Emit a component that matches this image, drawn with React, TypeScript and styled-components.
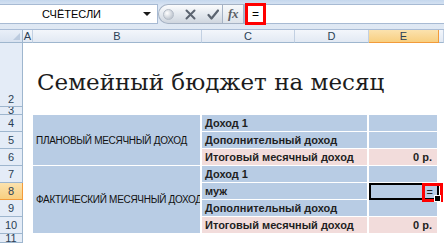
import React from "react";
import styled, { createGlobalStyle, css } from "styled-components";

const GlobalStyle = createGlobalStyle`
  html, body { margin: 0; padding: 0; background: #fff; }
  body {
    width: 444px;
    height: 243px;
    overflow: hidden;
    font-family: "Liberation Sans", Arial, sans-serif;
    font-size: 11px;
    color: #1f1f1f;
  }
`;

const Window = styled.div`
  display: flex;
  flex-direction: column;
  width: 444px;
  height: 243px;
  overflow: hidden;
`;

/* ---------- formula bar ---------- */

const FormulaBar = styled.div`
  display: flex;
  height: 30px;
  box-sizing: border-box;
  padding: 4px 0 5px 0;
  background: linear-gradient(#c5d7ed 0, #dbe6f4 20%, #dfe8f3 100%);
  border-bottom: 1px solid #a9bcd6;
`;

const NameBox = styled.div`
  display: flex;
  align-items: center;
  width: 158px;
  box-sizing: border-box;
  padding-left: 42px;
  background: #fff;
  border: 1px solid #a7bad3;
  border-left: none;
  color: #000;
`;

const DropArrow = styled.span`
  margin-left: auto;
  margin-right: 6px;
  width: 0;
  height: 0;
  border-left: 4px solid transparent;
  border-right: 4px solid transparent;
  border-top: 4px solid #1a1a1a;
`;

const Capsule = styled.div`
  display: flex;
  align-items: center;
  width: 64px;
  box-sizing: border-box;
  padding-left: 4px;
  gap: 11px;
  border: 1px solid #a5b2c4;
  border-right: none;
  border-radius: 11px 0 0 11px;
  background: linear-gradient(#fbfcfd, #e4e9ef 50%, #cfd6df);
`;

const Knob = styled.span`
  width: 9px;
  height: 9px;
  border-radius: 50%;
  border: 1px solid #b4bcc7;
  background: radial-gradient(circle at 35% 35%, #ffffff, #c3cad3 70%);
`;

const Glyph = styled.svg`
  flex: none;
`;

const FxButton = styled.div`
  display: flex;
  align-items: center;
  justify-content: center;
  width: 22px;
  box-sizing: border-box;
  border: 1px solid #a5b2c4;
  background: linear-gradient(#f7f9fb, #dde3ea);
  font-family: "Liberation Serif", "Times New Roman", serif;
  font-style: italic;
  font-weight: bold;
  font-size: 13px;
  color: #5b5f66;
  letter-spacing: -0.5px;
`;

const FormulaInput = styled.div`
  flex: 1;
  display: flex;
  background: #fff;
  border: 1px solid #a7bad3;
  border-right: none;
`;

const RedBox = styled.div`
  display: flex;
  align-items: center;
  justify-content: center;
  width: 21px;
  margin: -2px 0 -2px 0;
  box-sizing: border-box;
  border: 3px solid #ff0000;
  font-size: 12px;
  color: #000;
`;

/* ---------- sheet ---------- */

const Sheet = styled.div`
  flex: 1;
  display: grid;
  grid-template-columns: 23px 10px 169px 93px 74px 70px 1fr;
  grid-template-rows: 13px 64px 8px repeat(7, 17px) 1fr;
  overflow: hidden;
`;

const Corner = styled.div`
  grid-row: 1;
  grid-column: 1;
  position: relative;
  background: linear-gradient(#e9eff8, #d8e2f0);
  border-right: 1px solid #9eb6ce;
  border-bottom: 1px solid #9eb6ce;
  &::after {
    content: "";
    position: absolute;
    right: 2px;
    bottom: 2px;
    border-left: 7px solid transparent;
    border-bottom: 7px solid #bccbdf;
  }
`;

const activeHeader = css`
  background: linear-gradient(#fbe2ae, #f8cf80);
  border-color: #f29b3a;
`;

const ColHeader = styled.div<{ $active?: boolean }>`
  grid-row: 1;
  display: flex;
  align-items: center;
  justify-content: center;
  overflow: hidden;
  box-sizing: border-box;
  background: linear-gradient(#f3f6fb, #e2e9f3);
  border-right: 1px solid #c2d0e2;
  border-bottom: 1px solid #9eb6ce;
  color: #2b3f55;
  ${(p) => p.$active && activeHeader}
`;

const RowHeader = styled.div<{ $row: number; $active?: boolean; $bottom?: boolean }>`
  grid-column: 1;
  grid-row: ${(p) => p.$row};
  display: flex;
  justify-content: center;
  align-items: ${(p) => (p.$bottom ? "flex-end" : "center")};
  overflow: hidden;
  box-sizing: border-box;
  background: #e4ecf7;
  border-right: 1px solid #9eb6ce;
  border-bottom: 1px solid #9eb6ce;
  color: #2b3f55;
  line-height: 13px;
  ${(p) => p.$active && activeHeader}
`;

const Title = styled.div`
  grid-row: 2;
  grid-column: 3 / 8;
  align-self: end;
  padding: 0 0 12px 4px;
  white-space: nowrap;
  font-family: "DejaVu Serif", "Liberation Serif", serif;
  font-size: 23px;
  color: #1c1c1c;
`;

const cellBase = css`
  display: flex;
  align-items: center;
  box-sizing: border-box;
  border-right: 2px solid #fff;
  border-bottom: 1px solid #fff;
  white-space: nowrap;
  overflow: hidden;
`;

const GroupLabel = styled.div<{ $from: number; $to: number }>`
  ${cellBase}
  grid-column: 3;
  grid-row: ${(p) => `${p.$from} / ${p.$to}`};
  padding-left: 3px;
  font-size: 10px;
  letter-spacing: -0.3px;
  color: #111;
  background: #b8cce4;
`;

const Item = styled.div<{ $row: number; $total?: boolean }>`
  ${cellBase}
  grid-column: 4 / 6;
  grid-row: ${(p) => p.$row};
  padding-left: 3px;
  font-weight: bold;
  background: ${(p) => (p.$total ? "#f2dcdb" : "#b8cce4")};
`;

const Value = styled.div<{ $row: number; $total?: boolean; $selected?: boolean }>`
  ${cellBase}
  grid-column: 6;
  grid-row: ${(p) => p.$row};
  justify-content: flex-end;
  padding-right: 5px;
  font-weight: bold;
  background: ${(p) => (p.$total ? "#f2dcdb" : "#b8cce4")};
  ${(p) =>
    p.$selected &&
    css`
      position: relative;
      overflow: visible;
      border: 2px solid #000;
      font-weight: normal;
      padding-right: 4px;
    `}
`;

const Marker = styled.span`
  position: absolute;
  left: 51px;
  top: -2px;
  width: 21px;
  height: 19px;
  box-sizing: border-box;
  border: 3px solid #ff0000;
`;

const FillHandle = styled.span`
  position: absolute;
  right: -4px;
  bottom: -4px;
  width: 5px;
  height: 5px;
  background: #000;
  border: 1px solid #fff;
`;

const columns = ["A", "B", "C", "D", "E", ""];

const rows = [
  { row: 2, label: "2", bottom: true },
  { row: 3, label: "3" },
  { row: 4, label: "4" },
  { row: 5, label: "5" },
  { row: 6, label: "6" },
  { row: 7, label: "7" },
  { row: 8, label: "8", active: true },
  { row: 9, label: "9" },
  { row: 10, label: "10" },
  { row: 11, label: "11" },
];

const items = [
  { row: 4, text: "Доход 1" },
  { row: 5, text: "Дополнительный доход" },
  { row: 6, text: "Итоговый месячный доход", total: true, value: "0 р." },
  { row: 7, text: "Доход 1" },
  { row: 8, text: "муж", selected: true, value: "=" },
  { row: 9, text: "Дополнительный доход" },
  { row: 10, text: "Итоговый месячный доход", total: true, value: "0 р." },
];

const XIcon = () => (
  <Glyph width="11" height="11" viewBox="0 0 11 11">
    <path d="M1.5 1.5 L9.5 9.5 M9.5 1.5 L1.5 9.5" stroke="#5b6470" strokeWidth="2" strokeLinecap="round" />
  </Glyph>
);

const CheckIcon = () => (
  <Glyph width="12" height="11" viewBox="0 0 12 11">
    <path d="M1.5 6 L4.5 9.5 L11 1.5" stroke="#5b6470" strokeWidth="2.2" fill="none" strokeLinejoin="round" strokeLinecap="round" />
  </Glyph>
);

export default function App() {
  return (
    <Window>
      <GlobalStyle />
      <FormulaBar>
        <NameBox>
          СЧЁТЕСЛИ
          <DropArrow />
        </NameBox>
        <Capsule>
          <Knob />
          <XIcon />
          <CheckIcon />
        </Capsule>
        <FxButton>fx</FxButton>
        <FormulaInput>
          <RedBox>=</RedBox>
        </FormulaInput>
      </FormulaBar>

      <Sheet>
        <Corner />
        {columns.map((c) => (
          <ColHeader key={c || "F"} $active={c === "E"}>
            {c}
          </ColHeader>
        ))}
        {rows.map((r) => (
          <RowHeader key={r.row} $row={r.row} $active={r.active} $bottom={r.bottom}>
            {r.label}
          </RowHeader>
        ))}

        <Title>Семейный бюджет на месяц</Title>

        <GroupLabel $from={4} $to={7}>ПЛАНОВЫЙ МЕСЯЧНЫЙ ДОХОД</GroupLabel>
        <GroupLabel $from={7} $to={11}>ФАКТИЧЕСКИЙ МЕСЯЧНЫЙ ДОХОД</GroupLabel>

        {items.map((it) => (
          <React.Fragment key={it.row}>
            <Item $row={it.row} $total={it.total}>
              {it.text}
            </Item>
            <Value $row={it.row} $total={it.total} $selected={it.selected}>
              {it.value}
              {it.selected && (
                <>
                  <Marker />
                  <FillHandle />
                </>
              )}
            </Value>
          </React.Fragment>
        ))}
      </Sheet>
    </Window>
  );
}
